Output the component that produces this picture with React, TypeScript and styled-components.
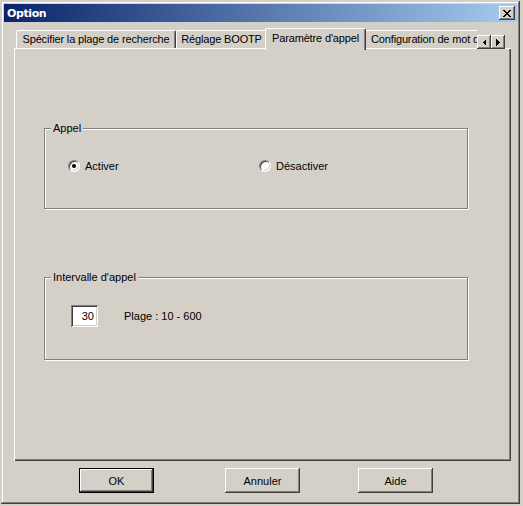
import React from 'react';
import styled, { createGlobalStyle } from 'styled-components';

const GlobalStyle = createGlobalStyle`
  html, body {
    margin: 0;
    padding: 0;
    background: #d4d0c8;
  }
  body {
    font-family: "Liberation Sans", Arial, sans-serif;
    font-size: 11px;
    color: #000;
  }
`;

const Page = styled.div`
  width: 523px;
  height: 506px;
  padding: 1px;
  box-sizing: border-box;
  background: #d4d0c8;
`;

const Window = styled.div`
  width: 519px;
  height: 503px;
  box-sizing: border-box;
  padding: 3px;
  display: flex;
  flex-direction: column;
  background: #d4d0c8;
  box-shadow: inset -1px -1px #404040, inset 1px 1px #d4d0c8,
    inset -2px -2px #808080, inset 2px 2px #ffffff;
`;

const TitleBar = styled.div`
  height: 18px;
  flex: none;
  display: flex;
  align-items: center;
  justify-content: space-between;
  padding: 0 2px 0 3px;
  background: linear-gradient(to right, #0a246a, #a6caf0);
`;

const Title = styled.span`
  color: #ffffff;
  font-family: "DejaVu Sans", Verdana, sans-serif;
  font-weight: bold;
  font-size: 11px;
  letter-spacing: -0.4px;
`;

const ClassicButton = styled.button`
  padding: 0;
  margin: 0;
  border: none;
  background: #d4d0c8;
  display: flex;
  align-items: center;
  justify-content: center;
  box-shadow: inset -1px -1px #404040, inset 1px 1px #ffffff,
    inset -2px -2px #808080, inset 2px 2px #d4d0c8;
`;

const CloseButton = styled(ClassicButton)`
  width: 16px;
  height: 14px;
`;

const TabRow = styled.div`
  flex: none;
  height: 22px;
  margin: 6px 6px -2px 10px;
  display: flex;
  align-items: flex-start;
  position: relative;
  z-index: 1;
`;

const TabStrip = styled.div`
  width: 463px;
  height: 22px;
  padding-left: 2px;
  box-sizing: border-box;
  display: flex;
  align-items: flex-start;
  overflow: hidden;
`;

const Tab = styled.div<{ $active?: boolean; $width?: number }>`
  flex: none;
  box-sizing: border-box;
  width: ${p => (p.$width ? `${p.$width + (p.$active ? 4 : 0)}px` : 'auto')};
  height: ${p => (p.$active ? 22 : 18)}px;
  margin: ${p => (p.$active ? '0 -2px 0 -2px' : '2px 0 0 0')};
  padding: ${p => (p.$active ? '0 0 3px 0' : '0 0 1px 0')};
  padding-left: ${p => (p.$width ? 0 : 6)}px;
  display: flex;
  align-items: center;
  justify-content: ${p => (p.$width ? 'center' : 'flex-start')};
  white-space: nowrap;
  letter-spacing: -0.15px;
  background: #d4d0c8;
  border-top: 1px solid #ffffff;
  border-left: 1px solid #ffffff;
  border-right: 1px solid #404040;
  border-radius: 2px 2px 0 0;
  box-shadow: inset -1px 0 #808080;
  position: relative;
  z-index: ${p => (p.$active ? 2 : 1)};
`;

const Spinner = styled.div`
  display: flex;
  margin-top: 7px;
`;

const SpinButton = styled(ClassicButton)`
  width: 14px;
  height: 14px;
`;

const Panel = styled.div`
  flex: 1;
  margin: 0 6px 0 10px;
  padding: 80px 0 0 30px;
  display: flex;
  flex-direction: column;
  box-shadow: inset 1px 1px #ffffff, inset -1px -1px #404040,
    inset -2px -2px #808080;
`;

const Group = styled.div<{ $height: number; $gap?: number }>`
  width: 424px;
  height: ${p => p.$height}px;
  margin-top: ${p => p.$gap ?? 0}px;
  box-sizing: border-box;
  border: 1px solid #808080;
  box-shadow: inset 1px 1px #ffffff, 1px 1px #ffffff;
  display: flex;
  flex-direction: column;
`;

const GroupLabel = styled.span`
  align-self: flex-start;
  height: 13px;
  line-height: 13px;
  margin: -7px 0 0 6px;
  padding: 0 2px;
  background: #d4d0c8;
`;

const RadioRow = styled.div`
  display: flex;
  margin: 24px 0 0 23px;
`;

const RadioOption = styled.label<{ $width?: number }>`
  display: flex;
  align-items: center;
  gap: 5px;
  height: 13px;
  width: ${p => (p.$width ? `${p.$width}px` : 'auto')};
`;

const RadioCircle = styled.span<{ $checked?: boolean }>`
  width: 12px;
  height: 12px;
  box-sizing: border-box;
  border-radius: 50%;
  background: #ffffff;
  border: 1px solid;
  border-color: #808080 #ffffff #ffffff #808080;
  box-shadow: inset 1px 1px #404040, inset -1px -1px #d4d0c8;
  display: flex;
  align-items: center;
  justify-content: center;

  &::after {
    content: '';
    width: 4px;
    height: 4px;
    border-radius: 50%;
    background: #000;
    display: ${p => (p.$checked ? 'block' : 'none')};
  }
`;

const FieldRow = styled.div`
  display: flex;
  align-items: center;
  gap: 26px;
  margin: 21px 0 0 26px;
`;

const NumberInput = styled.input`
  width: 27px;
  height: 22px;
  box-sizing: border-box;
  border: none;
  margin: 0;
  padding: 0 4px 0 0;
  text-align: right;
  background: #ffffff;
  font: 11px "Liberation Sans", Arial, sans-serif;
  color: #000;
  outline: none;
  box-shadow: inset 1px 1px #808080, inset -1px -1px #ffffff,
    inset 2px 2px #404040, inset -2px -2px #d4d0c8;
`;

const ButtonRow = styled.div`
  flex: none;
  display: flex;
  padding: 7px 0 8px 75px;
`;

const DialogButton = styled.button<{ $default?: boolean; $gap?: number }>`
  width: 75px;
  height: 25px;
  margin: 0 0 0 ${p => p.$gap ?? 0}px;
  padding: 0;
  border: none;
  background: #d4d0c8;
  font: 11px "Liberation Sans", Arial, sans-serif;
  color: #000;
  box-shadow: ${p =>
    p.$default
      ? 'inset 0 0 0 1px #000, inset -2px -2px #404040, inset 2px 2px #ffffff, inset -3px -3px #808080'
      : 'inset -1px -1px #404040, inset 1px 1px #ffffff, inset -2px -2px #808080, inset 2px 2px #d4d0c8'};
`;

const CloseGlyph = () => (
  <svg width="8" height="7" viewBox="0 0 8 7" shapeRendering="crispEdges">
    <path
      d="M0 0h2v1H0zM6 0h2v1H6zM1 1h2v1H1zM5 1h2v1H5zM2 2h4v1H2zM3 3h2v1H3zM2 4h4v1H2zM1 5h2v1H1zM5 5h2v1H5zM0 6h2v1H0zM6 6h2v1H6z"
      fill="#000"
    />
  </svg>
);

const Arrow = ({ dir }: { dir: 'left' | 'right' }) => (
  <svg width="4" height="7" viewBox="0 0 4 7" shapeRendering="crispEdges">
    <polygon points={dir === 'left' ? '4,0 4,7 0.5,3.5' : '0,0 0,7 3.5,3.5'} fill="#000" />
  </svg>
);

const tabs = [
  { label: 'Spécifier la plage de recherche', width: 160 },
  { label: 'Réglage BOOTP', width: 91 },
  { label: "Paramètre d'appel", width: 97 },
  { label: 'Configuration de mot de passe' },
];

function App() {
  const active = 2;
  return (
    <Page>
      <GlobalStyle />
      <Window>
        <TitleBar>
          <Title>Option</Title>
          <CloseButton>
            <CloseGlyph />
          </CloseButton>
        </TitleBar>

        <TabRow>
          <TabStrip>
            {tabs.map((t, i) => (
              <Tab key={t.label} $active={i === active} $width={t.width}>
                {t.label}
              </Tab>
            ))}
          </TabStrip>
          <Spinner>
            <SpinButton>
              <Arrow dir="left" />
            </SpinButton>
            <SpinButton>
              <Arrow dir="right" />
            </SpinButton>
          </Spinner>
        </TabRow>

        <Panel>
          <Group $height={81}>
            <GroupLabel>Appel</GroupLabel>
            <RadioRow>
              <RadioOption $width={191}>
                <RadioCircle $checked />
                Activer
              </RadioOption>
              <RadioOption>
                <RadioCircle />
                Désactiver
              </RadioOption>
            </RadioRow>
          </Group>

          <Group $height={83} $gap={68}>
            <GroupLabel>Intervalle d'appel</GroupLabel>
            <FieldRow>
              <NumberInput defaultValue="30" />
              <span>Plage : 10 - 600</span>
            </FieldRow>
          </Group>
        </Panel>

        <ButtonRow>
          <DialogButton $default>OK</DialogButton>
          <DialogButton $gap={71}>Annuler</DialogButton>
          <DialogButton $gap={58}>Aide</DialogButton>
        </ButtonRow>
      </Window>
    </Page>
  );
}

export default App;
